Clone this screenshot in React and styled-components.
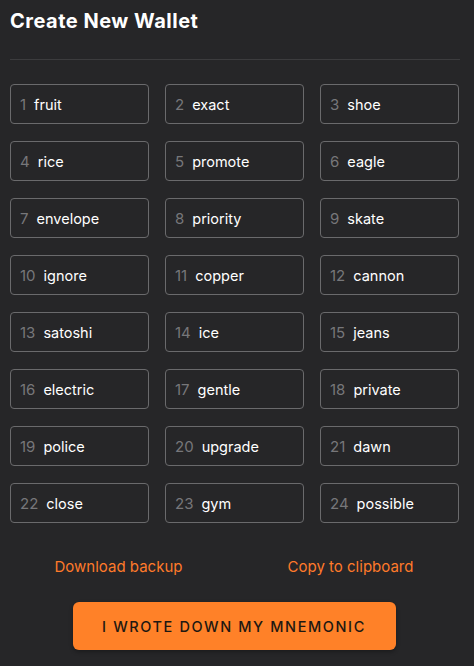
import React from "react"
import styled, { createGlobalStyle } from "styled-components"

const GlobalStyle = createGlobalStyle`
	html, body {
		margin: 0;
		padding: 0;
		background: #262628;
	}
	body {
		font-family: Inter, "Noto Sans", sans-serif;
	}
`

const Wrapper = styled.div`
	width: 474px;
	min-height: 666px;
	box-sizing: border-box;
	padding: 9px 14px 0 10px;
	background: #262628;
`
const Title = styled.h1`
	margin: 0;
	font-size: 20px;
	font-weight: 700;
	color: #ffffff;
	line-height: 24px;
	letter-spacing: 0.5px;
`
const Divider = styled.hr`
	margin: 26px 0 24px;
	border: none;
	border-top: 1px solid #3c3c3e;
`
const Grid = styled.div`
	display: grid;
	grid-template-columns: repeat(3, 139px);
	column-gap: 16px;
	row-gap: 17px;
`
const Cell = styled.div`
	display: flex;
	align-items: center;
	height: 40px;
	box-sizing: border-box;
	padding: 0 9px;
	border: 1px solid #6a6a6c;
	border-radius: 4px;
	font-size: 14.5px;
`
const Num = styled.span`
	color: #77777a;
	font-size: 15px;
	margin-right: 8px;
`
const Word = styled.span`
	color: #ffffff;
`
const Links = styled.div`
	display: grid;
	grid-template-columns: 1fr 1fr;
	margin-top: 34px;
	text-align: center;
`
const A = styled.a`
	color: #ff7a2a;
	font-size: 15px;
	cursor: pointer;
	padding-left: ${props => props.$left || 0}px;
	padding-right: ${props => props.$right || 0}px;
`
const ButtonRow = styled.div`
	display: flex;
	justify-content: center;
	margin-top: 26px;
	padding-right: 2px;
`
const Button = styled.button`
	width: 323px;
	height: 48px;
	border: none;
	border-radius: 6px;
	background: #ff8128;
	color: #1e1812;
	font-family: Inter, "Noto Sans", sans-serif;
	font-size: 14.5px;
	font-weight: 500;
	letter-spacing: 1.6px;
	cursor: pointer;
	box-shadow: 0 2px 4px rgba(0, 0, 0, 0.3);
`

const words = [
	"fruit", "exact", "shoe", "rice", "promote", "eagle",
	"envelope", "priority", "skate", "ignore", "copper", "cannon",
	"satoshi", "ice", "jeans", "electric", "gentle", "private",
	"police", "upgrade", "dawn", "close", "gym", "possible",
]

function App() {
	return (
		<Wrapper>
			<GlobalStyle />
			<Title>Create New Wallet</Title>
			<Divider />
			<Grid>
				{words.map((w, id) => (
					<Cell key={id}>
						<Num>{id + 1}</Num>
						<Word>{w}</Word>
					</Cell>
				))}
			</Grid>
			<Links>
				<A $right={8}>Download backup</A>
				<A $left={6}>Copy to clipboard</A>
			</Links>
			<ButtonRow>
				<Button>I WROTE DOWN MY MNEMONIC</Button>
			</ButtonRow>
		</Wrapper>
	)
}

export default App
